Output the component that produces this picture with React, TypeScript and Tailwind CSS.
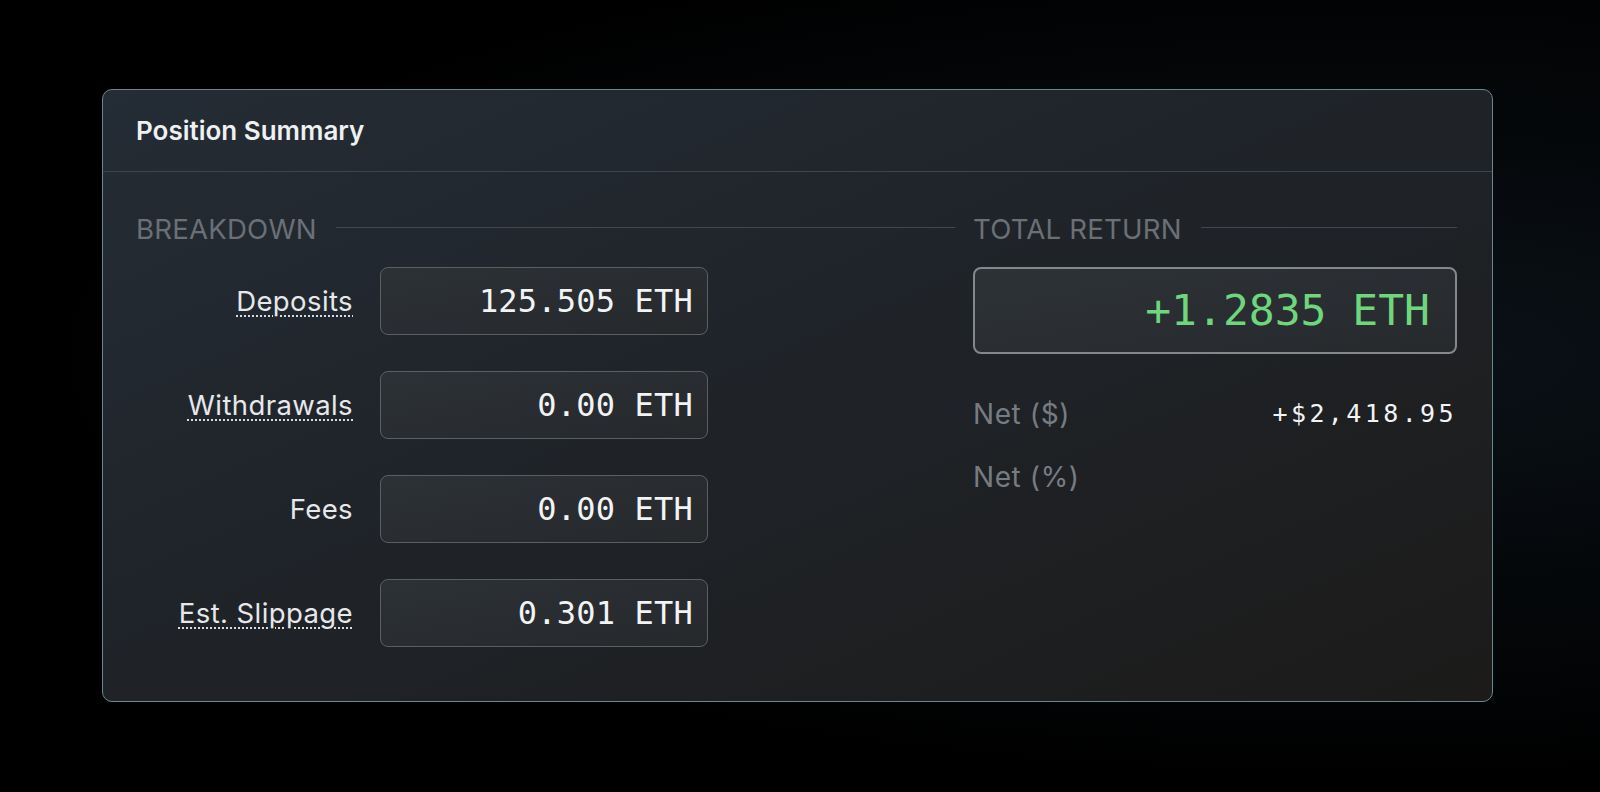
import React from "react";

const sans = { fontFamily: "Inter, 'Noto Sans', sans-serif" };

function Label({ text, dotted }: { text: string; dotted: boolean }) {
  return (
    <div className="w-[217px] whitespace-nowrap text-right text-[27.5px] leading-[32px] tracking-[0.4px] text-[#e6e8ea]">
      <span
        className={
          dotted
            ? "underline decoration-dotted decoration-2 underline-offset-[4px] decoration-[#d8dadc]"
            : ""
        }
      >
        {text}
      </span>
    </div>
  );
}

function ValueBox({ value }: { value: string }) {
  return (
    <div className="flex h-[68px] w-[328px] items-center justify-end rounded-[8px] border border-[#5a5f64] bg-gradient-to-br from-[#2c3136] to-[#26292c] pr-[14px] font-['DejaVu_Sans_Mono',monospace] text-[32px] leading-none tracking-[0.2px] text-[#f2f3f4]">
      {value}
    </div>
  );
}

function SectionTitle({ text }: { text: string }) {
  return (
    <div className="flex h-[32px] items-center">
      <span className="whitespace-nowrap text-[27.6px] leading-[32px] tracking-[0.2px] text-[#6a7076]">
        {text}
      </span>
      <div className="mb-[4px] ml-[19px] h-px flex-1 bg-[#41474d]" />
    </div>
  );
}

export default function App() {
  const rows = [
    { label: "Deposits", value: "125.505 ETH", dotted: true },
    { label: "Withdrawals", value: "0.00 ETH", dotted: true },
    { label: "Fees", value: "0.00 ETH", dotted: false },
    { label: "Est. Slippage", value: "0.301 ETH", dotted: true },
  ];
  return (
    <div
      className="min-h-[792px] w-full bg-[radial-gradient(ellipse_at_85%_45%,#0b1218_0%,#05080b_35%,#000000_70%)] pl-[102px] pt-[89px]"
      style={sans}
    >
      <div className="w-[1391px] overflow-hidden rounded-[10px] border border-[#6a8790] bg-gradient-to-br from-[#242c35] via-[#1f2328] to-[#1c1b1a]">
        <div className="flex h-[82px] items-center border-b border-[#3c454d] pl-[33px]">
          <span className="text-[26px] font-semibold leading-[32px] text-[#eef0f2]">
            Position Summary
          </span>
        </div>
        <div className="grid grid-cols-[819px_1fr] gap-[18px] pb-[54px] pl-[33px] pr-[35px] pt-[41px]">
          <div className="flex flex-col">
            <SectionTitle text="BREAKDOWN" />
            <div className="mt-[22px] flex flex-col gap-[36px]">
              {rows.map((r) => (
                <div key={r.label} className="flex items-center gap-[27px]">
                  <Label text={r.label} dotted={r.dotted} />
                  <ValueBox value={r.value} />
                </div>
              ))}
            </div>
          </div>
          <div className="flex flex-col">
            <SectionTitle text="TOTAL RETURN" />
            <div className="mt-[22px] flex h-[87px] items-center justify-end rounded-[8px] border-2 border-[#83888d] bg-gradient-to-br from-[#2d3237] to-[#272a2d] pr-[25px] font-['DejaVu_Sans_Mono',monospace] text-[43px] leading-none text-[#6fd67e]">
              +1.2835 ETH
            </div>
            <div className="mt-[44px] flex h-[32px] items-center justify-between">
              <span className="text-[28px] leading-[32px] tracking-[0.6px] text-[#767c82]">Net ($)</span>
              <span className="font-['DejaVu_Sans_Mono',monospace] text-[25px] leading-[32px] tracking-[3.4px] text-[#f2f3f4]">
                +$2,418.95
              </span>
            </div>
            <div className="mt-[31px] flex h-[32px] items-center">
              <span className="text-[28px] leading-[32px] tracking-[0.6px] text-[#767c82]">Net (%)</span>
            </div>
          </div>
        </div>
      </div>
    </div>
  );
}
